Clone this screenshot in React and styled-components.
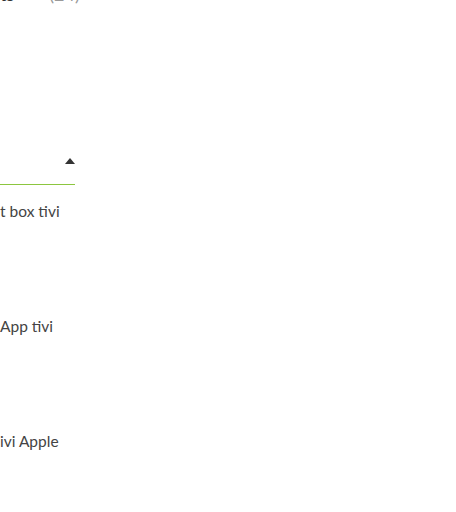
import React from 'react'
import styled, { createGlobalStyle } from 'styled-components';

const GlobalStyle = createGlobalStyle`
  html, body {
    margin: 0;
    padding: 0;
    background: #fff;
  }
  body {
    font-family: Lato, "Open Sans", sans-serif;
    color: #333;
    overflow: hidden;
  }
`

const Page = styled.div`
  width: 456px;
  height: 512px;
  overflow: hidden;
`

const CountRow = styled.div`
  display: flex;
  gap: 35px;
  margin-top: -16px;
  font-size: 18px;
  line-height: 21px;
  white-space: nowrap;
`

const Count = styled.span`
  color: ${props => props.$muted ? '#999' : '#333'};
`

const SortBox = styled.div`
  position: relative;
  box-sizing: border-box;
  width: 75px;
  height: 40px;
  margin-top: 140px;
  padding-top: 13px;
  display: flex;
  align-items: flex-start;
  justify-content: flex-end;

  &::after {
    content: "";
    position: absolute;
    left: 0;
    right: 0;
    bottom: 0;
    height: 1px;
    background: #8cc63f;
  }
`

const Caret = styled.span`
  width: 0;
  height: 0;
  margin-right: 0;
  border-left: 5px solid transparent;
  border-right: 5px solid transparent;
  border-bottom: 6px solid #333;
`

const List = styled.ul`
  list-style: none;
  margin: 17px 0 0;
  padding: 0;
`

const Item = styled.li`
  height: 115px;
  font-size: 15.5px;
  line-height: 18px;
  color: #444;
  white-space: nowrap;
`

const items = ['t box tivi', 'App tivi', 'ivi Apple']

export default function App() {
  return (
    <Page>
      <GlobalStyle />
      <CountRow>
        <Count>ts</Count>
        <Count $muted>(24)</Count>
      </CountRow>
      <SortBox>
        <Caret />
      </SortBox>
      <List>
        {items.map((item, index) => (
          <Item key={index}>{item}</Item>
        ))}
      </List>
    </Page>
  )
}
